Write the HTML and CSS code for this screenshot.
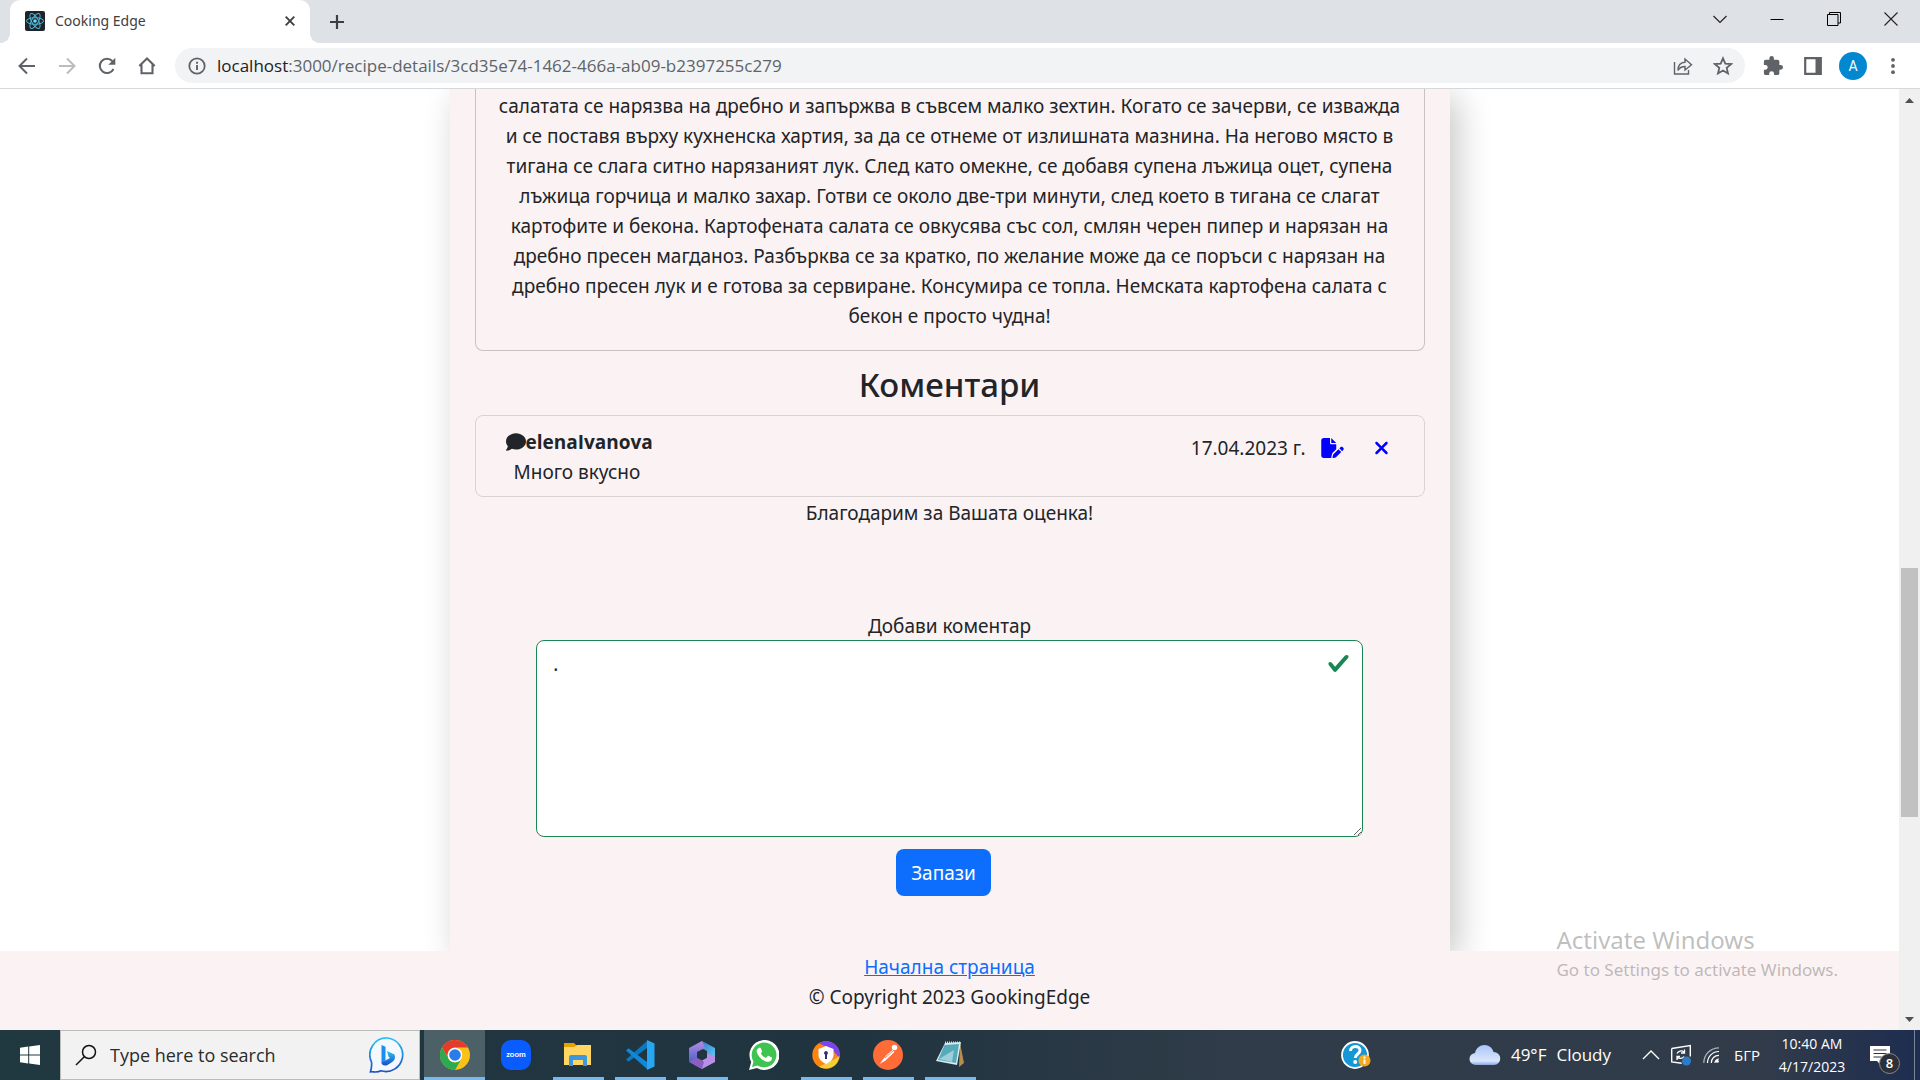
FILE: index.html
```
<!DOCTYPE html>
<html lang="bg">
<head>
<meta charset="utf-8">
<meta name="viewport" content="width=device-width, initial-scale=1">
<title>Cooking Edge</title>
<link rel="stylesheet" href="styles.css">
</head>
<body>
<header class="browser">
  <div class="tabstrip">
    <div class="tab">
      <svg class="favicon" viewBox="0 0 20 20"><rect width="20" height="20" rx="2" fill="#20232a"/><g fill="none" stroke="#4cb8d8"><ellipse cx="10" cy="10" rx="8.5" ry="3.3"/><ellipse cx="10" cy="10" rx="8.5" ry="3.3" transform="rotate(60 10 10)"/><ellipse cx="10" cy="10" rx="8.5" ry="3.3" transform="rotate(120 10 10)"/></g><circle cx="10" cy="10" r="1.8" fill="#61dafb"/></svg>
      <span class="tab-title">Cooking Edge</span>
      <button class="tab-close" aria-label="Close tab"><svg width="10" height="10" viewBox="0 0 10 10"><path d="M.7.7l8.6 8.6M9.3.7L.7 9.3" stroke="#3c4043" stroke-width="1.9"/></svg></button>
    </div>
    <button class="new-tab" aria-label="New tab"><svg width="16" height="16" viewBox="0 0 16 16"><path d="M8 1v14M1 8h14" stroke="#3c4043" stroke-width="2.2"/></svg></button>
    <div class="window-controls">
      <button aria-label="Search tabs"><svg width="14" height="14" viewBox="0 0 14 14"><path d="M.5 4L7 10.500 13.500 4" fill="none" stroke="#222" stroke-width="1.2"/></svg></button>
      <button aria-label="Minimize"><svg width="14" height="14" viewBox="0 0 14 14"><path d="M.5 7.500h13" stroke="#000"/></svg></button>
      <button aria-label="Restore"><svg width="14" height="14" viewBox="0 0 14 14"><path d="M.5 2.500h10.500v11H.5zM2.500 2.500V.5h11v10.500H11" fill="none" stroke="#000"/></svg></button>
      <button aria-label="Close"><svg width="14" height="14" viewBox="0 0 14 14"><path d="M.5.5l13 13M13.500.5l-13 13" stroke="#222" stroke-width="1.1"/></svg></button>
    </div>
  </div>
  <div class="toolbar">
    <nav class="nav-buttons">
      <button aria-label="Back"><svg width="20" height="20" viewBox="0 0 20 20"><path d="M18 10H3M10 2.500L2.500 10l7.500 7.500" fill="none" stroke="#5f6368" stroke-width="2"/></svg></button>
      <button aria-label="Forward"><svg width="20" height="20" viewBox="0 0 20 20"><path d="M2 10h15M10 2.500l7.500 7.500-7.500 7.500" fill="none" stroke="#babcbe" stroke-width="2"/></svg></button>
      <button aria-label="Reload"><svg width="20" height="20" viewBox="0 0 20 20"><path d="M16.500 13A7.200 7.200 0 1 1 15.300 5" fill="none" stroke="#5f6368" stroke-width="2"/><path d="M18.300 1.800v7h-7z" fill="#5f6368"/></svg></button>
      <button aria-label="Home"><svg width="20" height="20" viewBox="0 0 20 20"><path d="M2.300 10L10 2.500 17.700 10M4.500 8.500V17.200h11V8.500" fill="none" stroke="#5f6368" stroke-width="2.100"/></svg></button>
    </nav>
    <div class="address">
      <svg width="18" height="18" viewBox="0 0 18 18"><circle cx="9" cy="9" r="7.700" fill="none" stroke="#5f6368" stroke-width="1.800"/><path d="M9 8v5M9 4.800v2" stroke="#5f6368" stroke-width="1.900"/></svg>
      <span class="url"><b>localhost</b>:3000/recipe-details/3cd35e74-1462-466a-ab09-b2397255c279</span>
      <button aria-label="Share"><svg width="20" height="20" viewBox="0 0 20 20"><path d="M1.500 6v12h14v-4M5 14.500C5 9 8 6.500 12 6.300V3l6.500 5.700-6.500 5.300v-3.500c-3.500 0-5.500 1.200-7 4z" fill="none" stroke="#5f6368" stroke-width="1.400"/></svg></button>
      <button aria-label="Bookmark"><svg width="20" height="20" viewBox="0 0 20 20"><path d="M10 2.300l2.300 5.300 5.800.5-4.400 3.800 1.300 5.600-5-3-5 3 1.300-5.600L1.900 8.100l5.800-.5z" fill="none" stroke="#5f6368" stroke-width="1.800"/></svg></button>
    </div>
    <div class="tools">
      <button aria-label="Extensions"><svg width="20" height="20" viewBox="1 1 22 22"><path fill="#5f6368" d="M20.500 11H19V7c0-1.100-.9-2-2-2h-4V3.500a2.500 2.500 0 0 0-5 0V5H4c-1.100 0-2 .9-2 2v3.800h1.500a2.700 2.700 0 0 1 0 5.400H2V20c0 1.100.9 2 2 2h3.800v-1.500a2.700 2.700 0 0 1 5.400 0V22H17c1.100 0 2-.9 2-2v-4h1.500a2.500 2.500 0 0 0 0-5z"/></svg></button>
      <button aria-label="Side panel"><svg width="18" height="18" viewBox="0 0 18 18"><path d="M1.200 1.200h15.600v15.600H1.200z" fill="#fff" stroke="#5f6368" stroke-width="2.200"/><path d="M11.500 1H17v16h-5.500z" fill="#5f6368"/></svg></button>
      <button class="avatar">A</button>
      <button aria-label="Menu"><svg width="18" height="18" viewBox="0 0 18 18" fill="#5f6368"><circle cx="9" cy="2.800" r="1.900"/><circle cx="9" cy="9" r="1.900"/><circle cx="9" cy="15.200" r="1.900"/></svg></button>
    </div>
  </div>
</header>

<div class="viewport">
  <div class="page">
    <main class="sheet">
      <section class="recipe">
        <p>салатата се нарязва на дребно и запържва в съвсем малко зехтин. Когато се зачерви, се изважда<br>
        и се поставя върху кухненска хартия, за да се отнеме от излишната мазнина. На негово място в<br>
        тигана се слага ситно нарязаният лук. След като омекне, се добавя супена лъжица оцет, супена<br>
        лъжица горчица и малко захар. Готви се около две-три минути, след което в тигана се слагат<br>
        картофите и бекона. Картофената салата се овкусява със сол, смлян черен пипер и нарязан на<br>
        дребно пресен магданоз. Разбърква се за кратко, по желание може да се поръси с нарязан на<br>
        дребно пресен лук и е готова за сервиране. Консумира се топла. Немската картофена салата с<br>
        бекон е просто чудна!</p>
      </section>
      <h2>Коментари</h2>
      <article class="comment">
        <div class="comment-body">
          <div class="author"><svg width="20" height="20" viewBox="0 0 512 512"><path fill="#212529" d="M512 240c0 114.900-114.600 208-256 208c-37.100 0-72.300-6.400-104.100-17.900c-11.900 8.700-31.300 20.600-54.300 30.600C73.600 471.100 44.700 480 16 480c-6.500 0-12.300-3.900-14.800-9.900c-2.500-6-1.100-12.800 3.400-17.400c.3-.3 .7-.7 1.600-1.700c1.100-1.200 2.800-3.100 4.900-5.700c4.100-5 9.600-12.400 15.200-21.600c10-16.600 19.500-38.400 21.400-62.900C17.700 326.800 0 285.100 0 240C0 125.100 114.600 32 256 32s256 93.100 256 208z"/></svg><strong>elenaIvanova</strong></div>
          <p>Много вкусно</p>
        </div>
        <div class="comment-actions">
          <time datetime="2023-04-17">17.04.2023 г.</time>
          <button aria-label="Редактирай"><svg width="23" height="20" viewBox="0 0 576 512"><path fill="#00f" d="M0 64C0 28.700 28.700 0 64 0H224V128c0 17.700 14.300 32 32 32H384V285.700l-86.800 86.800c-10.300 10.300-17.500 23.100-21 37.200l-18.700 74.900c-2.300 9.200-1.800 18.800 1.300 27.500H64c-35.300 0-64-28.700-64-64V64zm384 64H256V0L384 128zM549.800 235.700l14.400 14.400c15.600 15.600 15.600 40.900 0 56.600l-29.400 29.400-71-71 29.400-29.400c15.600-15.600 40.900-15.600 56.600 0zM311.900 417L441.100 287.800l71 71L382.900 487.900c-4.100 4.100-9.200 7-14.900 8.400l-60.100 15c-5.500 1.400-11.200-.2-15.200-4.200s-5.600-9.700-4.200-15.200l15-60.100c1.400-5.600 4.300-10.800 8.400-14.900z"/></svg></button>
          <button aria-label="Изтрий"><svg width="13" height="20" viewBox="0 0 320 512"><path fill="#00f" d="M310.600 150.600c12.500-12.500 12.500-32.800 0-45.300s-32.800-12.500-45.300 0L160 210.700 54.600 105.400c-12.500-12.500-32.800-12.500-45.300 0s-12.500 32.800 0 45.300L114.700 256 9.400 361.400c-12.500 12.500-12.500 32.800 0 45.300s32.800 12.500 45.300 0L160 301.300 265.400 406.600c12.500 12.500 32.800 12.500 45.300 0s12.500-32.800 0-45.300L205.300 256 310.600 150.600z"/></svg></button>
        </div>
      </article>
      <p class="thanks">Благодарим за Вашата оценка!</p>
      <form class="comment-form">
        <label for="comment">Добави коментар</label>
        <div class="field">
          <textarea id="comment">.</textarea>
          <svg class="valid" width="23" height="23" viewBox="0 0 8 8"><path fill="#198754" d="M2.300 6.730.6 4.530c-.4-1.040.46-1.400 1.100-.8l1.100 1.400 3.400-3.800c.6-.63 1.600-.27 1.200.7l-4 4.600c-.43.5-.8.4-1.100.1z"/></svg>
        </div>
        <button type="button" class="save">Запази</button>
      </form>
    </main>
    <footer class="site-footer">
      <a href="#">Начална страница</a>
      <p>© Copyright 2023 GookingEdge</p>
    </footer>
  </div>
  <div class="scrollbar">
    <svg width="9" height="5" viewBox="0 0 9 5"><path d="M0 5L4.500 0 9 5z" fill="#505050"/></svg>
    <div class="track"><div class="thumb"></div></div>
    <svg width="9" height="5" viewBox="0 0 9 5"><path d="M0 0h9L4.500 5z" fill="#505050"/></svg>
  </div>
  <div class="watermark">
    <p class="watermark-title">Activate Windows</p>
    <p class="watermark-text">Go to Settings to activate Windows.</p>
  </div>
</div>

<footer class="taskbar">
  <button class="start" aria-label="Start"><svg width="20" height="20" viewBox="0 0 20 20"><path fill="#fff" d="M0 2.800L8.200 1.600v7.900H0zM9.200 1.500L20 0v9.500H9.200zM0 10.500h8.200v7.900L0 17.200zM9.200 10.500H20V20L9.200 18.500z"/></svg></button>
  <div class="search">
    <svg width="22" height="22" viewBox="0 0 22 22"><circle cx="14" cy="8" r="6.500" fill="none" stroke="#111" stroke-width="1.500"/><path d="M9.300 12.700L1 21" stroke="#111" stroke-width="1.500"/></svg>
    <input type="text" aria-label="Search" placeholder="Type here to search">
    <svg width="36" height="36" viewBox="0 0 36 36"><defs><linearGradient id="bing" x1="0" y1="0" x2="0" y2="1"><stop offset="0" stop-color="#2bc3f0"/><stop offset="1" stop-color="#1b4fc4"/></linearGradient></defs><path d="M18.500 1A16.800 16.800 0 1 1 12 33.800C8 36 4 34.500 1.500 34.800 2.500 31 3 28 2.500 25A16.800 16.800 0 0 1 18.500 1z" fill="#f4f9ff" stroke="url(#bing)" stroke-width="1.700"/><path d="M12.500 8l4 1.800v13.500l-4 3z" fill="#1c8cf0"/><path d="M18 14l7.500 3.600c1.500 4-.5 6.400-3 8l-4 2.300c-3 1.200-6 .2-6-2.500l8.500-4.400-1.500-1.500z" fill="url(#bing)"/></svg>
  </div>
  <div class="apps">
    <button class="app running active" aria-label="Chrome"><svg width="30" height="30" viewBox="0 0 30 30"><circle cx="15" cy="15" r="15" fill="#fbc116"/><path d="M2 7.500A15 15 0 0 1 28 7.500H15a7.500 7.500 0 0 0-6.500 11.200z" fill="#e33b2e"/><path d="M2 7.500l6.500 11.200A7.500 7.500 0 0 0 21.500 18.700L15 30A15 15 0 0 1 2 7.500z" fill="#2da94f"/><circle cx="15" cy="15" r="7.300" fill="#fff"/><circle cx="15" cy="15" r="5.800" fill="#2a7de9"/></svg></button>
    <button class="app" aria-label="Zoom"><svg width="30" height="30" viewBox="0 0 30 30"><rect width="30" height="30" rx="10" fill="#0b5cff"/><text x="15" y="17" fill="#fff" font-family="Lato, sans-serif" font-weight="700" font-size="8" text-anchor="middle">zoom</text></svg></button>
    <button class="app running" aria-label="File Explorer"><svg width="30" height="30" viewBox="0 0 30 30"><path d="M1 3h10l3 3v5H1z" fill="#e6a100"/><path d="M1 7h10l3-2h14v20H1z" fill="#ffd563"/><path d="M6 26V17a2 2 0 0 1 2-2h14a2 2 0 0 1 2 2v9h-4v-6H10v6z" fill="#3d97dc"/></svg></button>
    <button class="app running" aria-label="Visual Studio Code"><svg width="30" height="30" viewBox="0 0 30 30"><path d="M22 1L1 19.500l2.500 2.300L22 8z" fill="#0a78c2"/><path d="M3.500 8.200L1 10.500 22 29V22z" fill="#1287d6"/><path d="M22 0l7.500 3.500v23L22 30z" fill="#27a6f2"/></svg></button>
    <button class="app running" aria-label="Microsoft 365"><svg width="30" height="30" viewBox="0 0 30 30"><defs><linearGradient id="m365a" x1="0" y1="0" x2="1" y2="1"><stop offset="0" stop-color="#3b72c8"/><stop offset="1" stop-color="#5ad0f5"/></linearGradient><linearGradient id="m365b" x1="0" y1="0" x2="0" y2="1"><stop offset="0" stop-color="#b98be0"/><stop offset="1" stop-color="#4b63cf"/></linearGradient></defs><path d="M15 1l13 7v11l-8-5v-3l-8-4z" fill="url(#m365a)"/><path d="M15 1L2 8v14l8-4v-6l8-4z" fill="url(#m365b)"/><path d="M28 16v6L15 29 7 24.500 7 20l8-1 5-3v-2.500z" fill="#b78fe6"/><path d="M2 22l8-5 7 5-2 7z" fill="#8a5fc0"/><path d="M15 10l5 2.800v5L15 20.500 10 17.800v-5z" fill="#22343f"/></svg></button>
    <button class="app" aria-label="WhatsApp"><svg width="30" height="30" viewBox="0 0 30 30"><path d="M0 30l2.200-8A15 15 0 1 1 8 28z" fill="#fff"/><path d="M3 27l1.500-5.500a12.400 12.400 0 1 1 4 4z" fill="#3fc351"/><path d="M9.500 8.200c1-1 2-.5 2.300 0l1.300 3c.2.600-.9 1.800-1.200 2.200 1.300 2.300 2.800 3.600 5 4.600l1.700-1.900c.4-.4.900-.3 1.300-.1l2.800 1.400c.6.500 0 2.500-.6 3.200-1.400 1.500-3.600 1.500-5.200.9-4.500-1.700-8.400-5.700-9.200-9.800-.2-1.300.6-2.700 1.800-3.500z" fill="#fff"/></svg></button>
    <button class="app running" aria-label="Secure browser"><svg width="30" height="30" viewBox="0 0 30 30"><circle cx="15" cy="15" r="13.700" fill="#ff8412"/><path d="M8 3.300A13.700 13.700 0 0 1 28.500 18l-7-8z" fill="#7a45ee"/><path d="M28.500 16A13.700 13.700 0 0 1 8 26.700L22 20z" fill="#f1cf36"/><path d="M15 6l7.500 3v6c0 4-3 7-7.500 9-4.500-2-7.500-5-7.500-9V9z" fill="#fff"/><path d="M15 11a2 2 0 0 1 1 3.700V19h-2v-4.300A2 2 0 0 1 15 11z" fill="#34306b"/></svg></button>
    <button class="app running" aria-label="Postman"><svg width="30" height="30" viewBox="0 0 30 30"><circle cx="15" cy="15" r="15" fill="#ff6c37"/><circle cx="21.500" cy="7.500" r="2.700" fill="#fff"/><path d="M19.500 10l2 2-9 8.500L6.500 24l7-9z" fill="#fff"/><path d="M12 18l8-7M19 15l3-3" stroke="#ff6c37" fill="none" stroke-width=".8"/></svg></button>
    <button class="app running" aria-label="Notepad"><svg width="30" height="30" viewBox="0 0 30 30"><path d="M25 3l4 20-5 4z" fill="#b88b51"/><path d="M10 3l16-1-4 23L1 21z" fill="#d8eef2"/><path d="M9.500 5L24 4l-3 19L3 20z" fill="#56aab9"/><path d="M4 19l15-9-2 12z" fill="#9bd0d9"/><path d="M10 2.500h16" stroke="#ddd" stroke-width="2" stroke-dasharray="1 1"/></svg></button>
  </div>
  <div class="tray">
    <button class="help" aria-label="Help"><svg width="30" height="30" viewBox="0 0 30 30"><circle cx="14" cy="15" r="13" fill="#1597d5" stroke="#fff" stroke-width="1.800"/><path d="M9.500 11c0-6 9.500-6 9.500-.5 0 3.500-4.700 3.500-4.700 7.500" fill="none" stroke="#fff" stroke-width="3"/><circle cx="14.200" cy="22" r="2" fill="#fff"/><circle cx="23.500" cy="20.500" r="6" fill="#f6a91c"/><path d="M23.500 19.500v4.500M23.500 16.500v2" stroke="#fff" stroke-width="2"/></svg></button>
    <button class="weather"><svg width="32" height="22" viewBox="0 0 32 22"><defs><linearGradient id="cloud" x1="0" y1="0" x2="0" y2="1"><stop offset="0" stop-color="#a9c5f8"/><stop offset=".8" stop-color="#dbe6fb"/><stop offset="1" stop-color="#86a6e0"/></linearGradient></defs><path d="M7 21a6 6 0 0 1-1-12C7 4 11 1 15.500 1s8 3 9 7A6.500 6.500 0 0 1 25 21z" fill="url(#cloud)"/></svg><span>49°F</span><span>Cloudy</span></button>
    <button class="tray-icon" aria-label="Hidden icons"><svg width="18" height="18" viewBox="0 0 18 18"><path d="M1 13l8-8 8 8" fill="none" stroke="#fff" stroke-width="1.400"/></svg></button>
    <button class="tray-icon" aria-label="Update"><svg width="20" height="22" viewBox="0 0 20 22"><path d="M.7 4.500L19.300 1.500v11M.7 4.500v13.500l10 1.300" fill="none" stroke="#fff" stroke-width="1.400"/><path d="M6 9.500a4.500 4.500 0 0 1 7-1.500M13.500 5.500V9H10M13 12.500a4.500 4.500 0 0 1-6.500 1M6 16v-3.500h3" fill="none" stroke="#fff" stroke-width="1.300"/><circle cx="15.500" cy="17" r="4.500" fill="#2e7bc8"/></svg></button>
    <button class="tray-icon" aria-label="Network"><svg width="16" height="16" viewBox="0 0 16 16"><g fill="none" stroke="#fff" stroke-width="1.200"><path d="M.8 16C.8 7.500 7.500.8 16 .8" opacity=".6"/><path d="M4.500 16C4.500 9.500 9.500 4.500 16 4.500"/><path d="M8.300 16c0-4.500 3.200-7.700 7.700-7.700"/><path d="M12 16c0-2.200 1.800-4 4-4"/></g><circle cx="14.300" cy="14.300" r="1.500" fill="#fff"/></svg></button>
    <button class="lang">БГР</button>
    <div class="clock"><span>10:40 AM</span><span>4/17/2023</span></div>
    <button class="notices" aria-label="Notifications"><svg width="22" height="20" viewBox="0 0 22 20"><path d="M1 1h20v15h-9.500V20L8 16H1z" fill="#fff"/><path d="M4.500 5h13M4.500 8.500h13M4.500 12h8" stroke="#2a3347" stroke-width="1.200"/></svg><span class="count">8</span></button>
    <div class="show-desktop"></div>
  </div>
</footer>
</body>
</html>
```
FILE: styles.css
```
* { box-sizing: border-box; }

body {
  margin: 0;
  height: 100vh;
  display: flex;
  flex-direction: column;
  overflow: hidden;
  background: #fff;
  color: #212529;
  font: 19px/30px "Noto Sans", "Open Sans", sans-serif;
}

p, h2 { margin: 0; }

button {
  display: flex;
  align-items: center;
  justify-content: center;
  padding: 0;
  border: 0;
  background: none;
  color: inherit;
  font: inherit;
}

svg { display: block; flex: none; }

/* Browser frame */
.tabstrip {
  display: flex;
  align-items: center;
  height: 43px;
  padding-left: 10px;
  background: #dee1e6;
}

.tab {
  position: relative;
  display: flex;
  align-items: center;
  align-self: stretch;
  width: 300px;
  padding: 0 15px 2px;
  gap: 10px;
  border-radius: 10px 10px 0 0;
  background: #fff;
}

.tab::before,
.tab::after {
  content: "";
  position: absolute;
  bottom: 0;
  width: 10px;
  height: 10px;
}

.tab::before {
  left: -10px;
  background: radial-gradient(circle at 0 0, transparent 10px, #fff 10px);
}

.tab::after {
  right: -10px;
  background: radial-gradient(circle at 100% 0, transparent 10px, #fff 10px);
}

.favicon { width: 20px; height: 20px; }

.tab-title {
  flex: 1;
  color: #3c4043;
  font-size: 14px;
}

.new-tab { margin-left: 19px; }

.window-controls {
  display: flex;
  align-items: center;
  align-self: stretch;
  margin-left: auto;
  padding: 0 1px 6px 0;
}

.window-controls button { width: 57px; }

.toolbar {
  display: flex;
  align-items: center;
  height: 46px;
  padding: 0 7px;
  border-bottom: 1px solid #d6d8db;
  background: #fff;
}

.nav-buttons,
.tools { display: flex; align-items: center; }

.nav-buttons button { width: 40px; }
.nav-buttons { margin-right: 8px; }
.tools { margin-left: 8px; }
.tools button { width: 40px; }

.tools .avatar {
  width: 28px;
  height: 28px;
  margin: 0 6px;
  border-radius: 50%;
  background: #0288d1;
  color: #fff;
  font: 14px/28px Roboto, sans-serif;
}

.address {
  flex: 1;
  display: flex;
  align-items: center;
  height: 35px;
  padding: 0 12px 0 13px;
  border-radius: 18px;
  background: #f1f3f4;
}

.address button { width: 20px; margin-left: 20px; }

.url {
  flex: 1;
  margin-left: 11px;
  color: #5f6368;
  font-family: "Open Sans", sans-serif;
  font-size: 17px;
}

.url b { color: #202124; font-weight: 400; }

/* Page area */
.viewport {
  position: relative;
  flex: 1;
  display: flex;
  min-height: 0;
}

.page {
  flex: 1;
  display: flex;
  flex-direction: column;
  overflow: hidden;
}

.sheet {
  flex: 1;
  display: flex;
  flex-direction: column;
  width: 100%;
  max-width: 1000px;
  margin: 0 auto;
  padding: 0 25px;
  background: #fbf2f3;
  box-shadow: 8px 8px 32px rgba(0, 0, 0, 0.22);
  text-align: center;
}

.recipe {
  padding: 2px 0 19px;
  border: 1px solid #c9c2c3;
  border-top: 0;
  border-radius: 0 0 8px 8px;
  white-space: nowrap;
}

h2 {
  padding: 13px 0 9px;
  font-size: 33px;
  font-weight: 500;
  line-height: 42px;
}

.comment {
  display: flex;
  justify-content: space-between;
  padding: 11px 30px 9px;
  border: 1px solid #d9d3d4;
  border-radius: 8px;
  text-align: left;
}

.author {
  display: flex;
  align-items: center;
  font-family: "Open Sans", sans-serif;
}

.comment-body p { padding-left: 8px; }

.comment-actions {
  display: flex;
  align-items: center;
  align-self: flex-start;
  padding-top: 6px;
}

.comment-actions button { height: 30px; }
.comment-actions time { margin-right: 15px; }
.comment-actions button + button { margin: 0 6px 0 31px; }

.thanks { padding-top: 1px; }

.comment-form {
  display: flex;
  flex-direction: column;
  align-items: center;
  padding-top: 84px;
}

.comment-form label { line-height: 28px; }

.field { position: relative; width: 87%; }

textarea {
  display: block;
  width: 100%;
  height: 197px;
  padding: 8px 16px;
  border: 1px solid #198754;
  border-radius: 8px;
  background: #fff;
  color: #212529;
  font: inherit;
}

.valid { position: absolute; top: 12px; right: 13px; }

.save {
  height: 47px;
  margin: 12px 12px 0 0;
  padding: 0 15px;
  border-radius: 8px;
  background: #0d6efd;
  color: #fff;
}

.site-footer {
  z-index: 1;
  padding: 1px 0 18px;
  background: #fbf2f3;
  text-align: center;
}

.site-footer a { color: #0d6efd; }

.scrollbar {
  display: flex;
  flex-direction: column;
  align-items: center;
  width: 21px;
  padding: 9px 0 8px;
  background: #f0f0f0;
}

.track {
  flex: 1;
  width: 17px;
  padding-top: 465px;
}

.thumb { height: 249px; background: #c1c1c1; }

.watermark {
  position: absolute;
  right: 82px;
  bottom: 45px;
  z-index: 2;
  color: rgba(100, 100, 100, 0.42);
}

.watermark-title { font-size: 24px; }
.watermark-text { font-size: 17px; }

/* Desktop taskbar */
.taskbar {
  display: flex;
  height: 50px;
  background: linear-gradient(90deg, #203840, #20343f 45%, #303c49 65%, #313b4a 92%, #1e2d50);
  color: #fff;
  font-family: "Open Sans", sans-serif;
}

.start { width: 60px; }

.search {
  display: flex;
  align-items: center;
  width: 360px;
  padding: 0 14px;
  border: 1px solid #bbb;
  background: #f2f2f2;
}

.search input {
  flex: 1;
  min-width: 0;
  padding: 0 13px;
  border: 0;
  background: none;
  font: inherit;
  font-size: 18px;
}

.search input::placeholder { color: #2b2b2b; opacity: 1; }

.apps { display: flex; margin-left: 4px; }

.app {
  position: relative;
  width: 62px;
}

.app.active { width: 61px; background: #4c6067; }

.app.running::after {
  content: "";
  position: absolute;
  right: 5px;
  bottom: 0;
  left: 6px;
  height: 3px;
  background: #76b9ed;
}

.app.active::after { right: 0; left: 0; }

.tray { display: flex; align-items: center; margin-left: auto; }
.help { margin-right: 98px; }
.weather { margin-right: 25px; font-size: 17px; }
.weather span { margin-left: 10px; }
.tray-icon { width: 30px; }
.lang { width: 42px; font-size: 15px; }

.clock {
  display: flex;
  flex-direction: column;
  width: 88px;
  margin-right: 12px;
  text-align: center;
  font-size: 14px;
  line-height: 23px;
}

.notices { position: relative; width: 24px; }

.count {
  position: absolute;
  top: 8px;
  left: 11px;
  width: 21px;
  height: 21px;
  border: 1px solid #888;
  border-radius: 50%;
  background: #2d3036;
  font-size: 13px;
  font-weight: 600;
  line-height: 19px;
}

.show-desktop {
  align-self: stretch;
  width: 6px;
  margin-left: 22px;
  border-left: 1px solid #7b8496;
}
```
